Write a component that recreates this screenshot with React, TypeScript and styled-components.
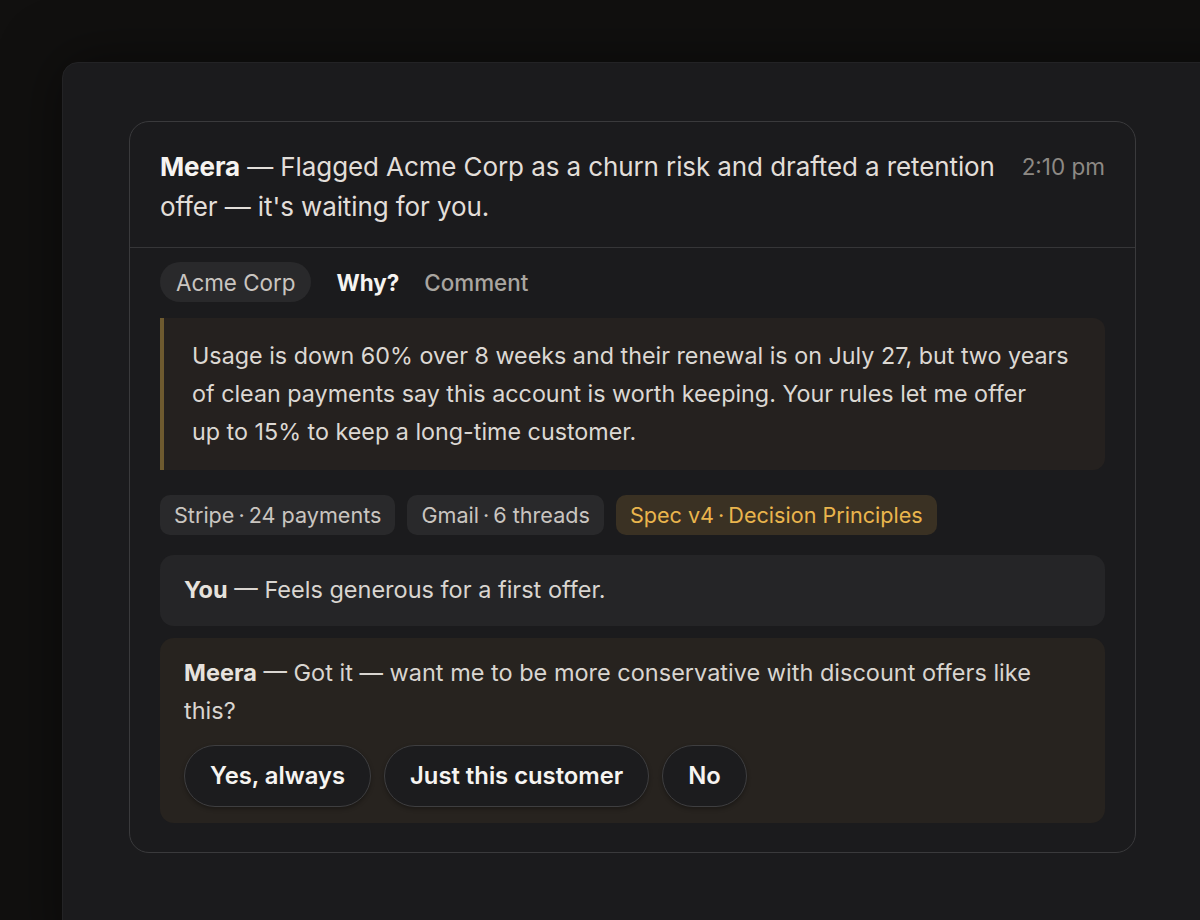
import React from "react";
import styled, { createGlobalStyle } from "styled-components";

const Global = createGlobalStyle`
  html, body { margin: 0; padding: 0; background: #11100f; }
  body { font-family: Inter, "Noto Sans", sans-serif; -webkit-font-smoothing: antialiased; }
  * { box-sizing: border-box; }
`;

const Page = styled.div`
  width: 1200px;
  height: 920px;
  overflow: hidden;
  padding: 62px 0 0 62px;
  background: #11100f;
`;

const Panel = styled.div`
  width: 1200px;
  height: 900px;
  background: #1b1b1d;
  border: 1px solid #232325;
  border-radius: 16px;
  padding: 58px 0 0 66px;
  box-shadow: 0 0 60px rgba(0,0,0,0.5);
`;

const Card = styled.div`
  width: 1007px;
  border: 1px solid #3a3a3c;
  border-radius: 20px;
  background: #1b1b1d;
`;

const Header = styled.div`
  display: flex;
  align-items: flex-start;
  gap: 26px;
  padding: 25px 30px 20px 30px;
  border-bottom: 1px solid #363638;
`;

const Headline = styled.div`
  flex: 1;
  font-size: 26px;
  line-height: 40px;
  color: #e2ded9;
  letter-spacing: -0.1px;
`;

const Name = styled.b`
  font-weight: 700;
  color: #f6f4f1;
`;

const Time = styled.div`
  font-size: 22.5px;
  line-height: 40px;
  color: #8d8984;
  white-space: nowrap;
`;

const Body = styled.div`
  display: flex;
  flex-direction: column;
  padding: 14px 30px 29px 30px;
`;

const Tabs = styled.div`
  display: flex;
  align-items: center;
  gap: 25px;
`;

const Pill = styled.span`
  display: inline-flex;
  align-items: center;
  height: 40px;
  padding: 0 16px;
  border-radius: 20px;
  background: #29292b;
  color: #c9c5c0;
  font-size: 22.4px;
`;

const Tab = styled.span<{ $active?: boolean }>`
  font-size: 22.4px;
  font-weight: ${(p) => (p.$active ? 700 : 500)};
  color: ${(p) => (p.$active ? "#f6f4f1" : "#a9a5a0")};
`;

const Quote = styled.div`
  margin-top: 16px;
  background: #25211f;
  border-left: 4px solid #6e5a2f;
  border-radius: 0 12px 12px 0;
  padding: 19px 30px 19px 28px;
  font-size: 23.3px;
  line-height: 38px;
  color: #dcd8d3;
`;

const Sources = styled.div`
  display: flex;
  gap: 12px;
  margin-top: 25px;
`;

const Source = styled.span<{ $spec?: boolean }>`
  display: inline-flex;
  align-items: center;
  height: 40px;
  padding: 0 14px;
  border-radius: 10px;
  background: ${(p) => (p.$spec ? "#3a3123" : "#29292b")};
  color: ${(p) => (p.$spec ? "#eab54d" : "#c9c5c0")};
  font-size: 21.6px;
`;

const Dot = styled.span`
  margin: 0 4px;
`;

const Bubble = styled.div<{ $agent?: boolean }>`
  margin-top: ${(p) => (p.$agent ? "12px" : "20px")};
  background: ${(p) => (p.$agent ? "#27231f" : "#252527")};
  border-radius: 14px;
  padding: ${(p) => (p.$agent ? "16px 60px 16px 24px" : "16px 24px")};
  font-size: 23.5px;
  line-height: 38.5px;
  color: #d9d5d0;
`;

const BubbleName = styled.b`
  font-weight: 700;
  color: #e6e2dd;
`;

const Actions = styled.div`
  display: flex;
  gap: 13px;
  margin-top: 14px;
`;

const Choice = styled.button`
  height: 62px;
  padding: 0 25px;
  border-radius: 31px;
  border: 1.5px solid #3e3e40;
  background: #1c1c1e;
  color: #f6f4f1;
  font-family: inherit;
  font-size: 23.8px;
  font-weight: 600;
  box-shadow: 0 2px 4px rgba(0,0,0,0.3);
  cursor: pointer;
`;

export default function App() {
  return (
    <>
      <Global />
      <Page>
        <Panel>
          <Card>
            <Header>
              <Headline>
                <Name>Meera</Name> — Flagged Acme Corp as a churn risk and drafted a retention offer — it's waiting for you.
              </Headline>
              <Time>2:10 pm</Time>
            </Header>
            <Body>
              <Tabs>
                <Pill>Acme Corp</Pill>
                <Tab $active>Why?</Tab>
                <Tab>Comment</Tab>
              </Tabs>
              <Quote>
                Usage is down 60% over 8 weeks and their renewal is on July 27, but two years of clean payments say this account is worth keeping. Your rules let me offer up{"\u00A0"}to 15% to keep a long-time customer.
              </Quote>
              <Sources>
                <Source>Stripe<Dot>·</Dot>24 payments</Source>
                <Source>Gmail<Dot>·</Dot>6 threads</Source>
                <Source $spec>Spec v4<Dot>·</Dot>Decision Principles</Source>
              </Sources>
              <Bubble>
                <BubbleName>You</BubbleName> — Feels generous for a first offer.
              </Bubble>
              <Bubble $agent>
                <BubbleName>Meera</BubbleName> — Got it — want me to be more conservative with discount offers like this?
                <Actions>
                  <Choice>Yes, always</Choice>
                  <Choice>Just this customer</Choice>
                  <Choice>No</Choice>
                </Actions>
              </Bubble>
            </Body>
          </Card>
        </Panel>
      </Page>
    </>
  );
}
